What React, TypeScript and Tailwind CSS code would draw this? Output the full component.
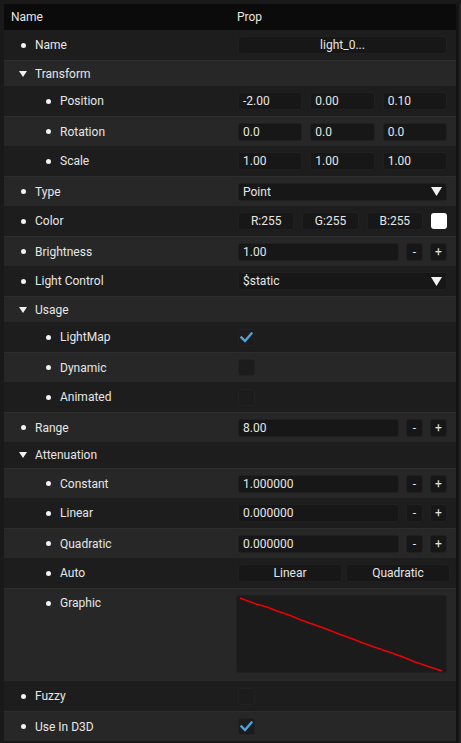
import React from "react";

const font = { fontFamily: "Roboto, 'Noto Sans', sans-serif" };

function Dot() {
  return <span className="inline-block w-[5px] h-[5px] rounded-full bg-[#f2f2f2]" />;
}

function Tri() {
  return (
    <svg width="8" height="6" viewBox="0 0 8 6" className="block">
      <polygon points="0,0 8,0 4,6" fill="#f0f0f0" />
    </svg>
  );
}

function Label({ text, level, kind }: { text: string; level: number; kind: "dot" | "tri" }) {
  const pad =
    kind === "tri"
      ? "pl-[15px]"
      : level === 0
      ? "pl-[17px]"
      : "pl-[42px]";
  return (
    <div className={`flex items-center ${pad}`}>
      {kind === "dot" ? <Dot /> : <Tri />}
      <span className={`text-[#e6e6e6] text-[12px] leading-[16px] ${kind === "dot" ? "ml-[9px]" : "ml-[8px]"}`}>{text}</span>
    </div>
  );
}

const boxCls = "h-[18px] bg-[#171717] border border-[#202020] rounded-[3px] text-[12px] leading-[16px] text-[#e6e6e6] flex items-center";

function Input({ v, w }: { v: string; w?: string }) {
  return <div className={`${boxCls} px-[4px] ${w ?? "flex-1"}`}>{v}</div>;
}

function Btn({ t }: { t: string }) {
  return <div className={`${boxCls} w-[17px] justify-center`}>{t}</div>;
}

function Check({ on }: { on: boolean }) {
  return (
    <div className="w-[17px] h-[17px] bg-[#1c1c1c] border border-[#222] rounded-[3px] flex items-center justify-center">
      {on && (
        <svg width="13" height="11" viewBox="0 0 13 11">
          <path d="M1.5 5.5 L5 9 L11.5 1.5" stroke="#4ea3dc" strokeWidth="2.4" fill="none" strokeLinecap="square" />
        </svg>
      )}
    </div>
  );
}

function Select({ v }: { v: string }) {
  return (
    <div className={`${boxCls} flex-1 px-[4px] justify-between`}>
      <span>{v}</span>
      <svg width="11" height="9" viewBox="0 0 11 9">
        <polygon points="0,0 11,0 5.5,9" fill="#f2f2f2" />
      </svg>
    </div>
  );
}

type RowDef = {
  text: string;
  level: number;
  kind: "dot" | "tri";
  widget?: React.ReactNode;
  tall?: boolean;
};

function NumPM({ v }: { v: string }) {
  return (
    <div className="flex items-center gap-[7px]">
      <Input v={v} />
      <Btn t="-" />
      <Btn t="+" />
    </div>
  );
}

export default function App() {
  const rows: RowDef[] = [
    { text: "Name", level: 0, kind: "dot", widget: <div className={`${boxCls} justify-center`}>light_0...</div> },
    { text: "Transform", level: 0, kind: "tri" },
    { text: "Position", level: 1, kind: "dot", widget: <div className="flex gap-[8px]"><Input v="-2.00" /><Input v="0.00" /><Input v="0.10" /></div> },
    { text: "Rotation", level: 1, kind: "dot", widget: <div className="flex gap-[8px]"><Input v="0.0" /><Input v="0.0" /><Input v="0.0" /></div> },
    { text: "Scale", level: 1, kind: "dot", widget: <div className="flex gap-[8px]"><Input v="1.00" /><Input v="1.00" /><Input v="1.00" /></div> },
    { text: "Type", level: 0, kind: "dot", widget: <div className="flex"><Select v="Point" /></div> },
    {
      text: "Color", level: 0, kind: "dot", widget: (
        <div className="flex items-center gap-[8px]">
          <div className={`${boxCls} flex-1 justify-center`}>R:255</div>
          <div className={`${boxCls} flex-1 justify-center`}>G:255</div>
          <div className={`${boxCls} flex-1 justify-center`}>B:255</div>
          <div className="w-[16px] h-[16px] rounded-[3px] bg-white" />
        </div>
      )
    },
    { text: "Brightness", level: 0, kind: "dot", widget: <NumPM v="1.00" /> },
    { text: "Light Control", level: 0, kind: "dot", widget: <div className="flex"><Select v="$static" /></div> },
    { text: "Usage", level: 0, kind: "tri" },
    { text: "LightMap", level: 1, kind: "dot", widget: <Check on /> },
    { text: "Dynamic", level: 1, kind: "dot", widget: <Check on={false} /> },
    { text: "Animated", level: 1, kind: "dot", widget: <Check on={false} /> },
    { text: "Range", level: 0, kind: "dot", widget: <NumPM v="8.00" /> },
    { text: "Attenuation", level: 0, kind: "tri" },
    { text: "Constant", level: 1, kind: "dot", widget: <NumPM v="1.000000" /> },
    { text: "Linear", level: 1, kind: "dot", widget: <NumPM v="0.000000" /> },
    { text: "Quadratic", level: 1, kind: "dot", widget: <NumPM v="0.000000" /> },
    {
      text: "Auto", level: 1, kind: "dot", widget: (
        <div className="flex gap-[4px] mr-[-3px]">
          <div className={`${boxCls} flex-1 justify-center`}>Linear</div>
          <div className={`${boxCls} flex-1 justify-center`}>Quadratic</div>
        </div>
      )
    },
    {
      text: "Graphic", level: 1, kind: "dot", tall: true, widget: (
        <div className="h-[78px] bg-[#1b1b1b] border border-[#202020] rounded-[3px]">
          <svg width="209" height="76" viewBox="0 0 209 76" className="block">
            <polyline
              points="3,2 19,8 30,11 40,15 52,19 64,24 78,29 92,34 102,38 116,43 126,47 140,52 152,56 166,61 178,66 190,70 205,75"
              stroke="#ee0000"
              strokeWidth="1.4"
              fill="none"
            />
          </svg>
        </div>
      )
    },
    { text: "Fuzzy", level: 0, kind: "dot", widget: <Check on={false} /> },
    { text: "Use In D3D", level: 0, kind: "dot", widget: <Check on /> },
  ];

  return (
    <div style={font} className="w-[461px] h-[743px] bg-[#191919] pt-[4px] pl-[4px] flex overflow-hidden">
      <div className="w-[452px] flex flex-col">
        <div className="h-[26px] flex bg-[#0b0b0b] text-[12px] text-[#e6e6e6] items-center">
          <div className="w-[226px] pl-[7px]">Name</div>
          <div className="flex-1 pl-[7px]">Prop</div>
        </div>
        {rows.map((r, i) => {
          const light = i % 2 === 1;
          const h = r.tall ? "h-[93px]" : r.widget ? "h-[30px]" : "h-[26px]";
          return (
            <div
              key={i}
              className={`${h} flex ${light ? "bg-[#272727] border-t border-[#2d2d2d]" : "bg-[#1d1d1d]"} ${r.tall ? "items-start" : "items-center"}`}
            >
              <div className={`w-[226px] ${r.tall ? "pt-[6px]" : ""}`}>
                <Label text={r.text} level={r.level} kind={r.kind} />
              </div>
              <div className={`flex-1 pl-[8px] pr-[9px] ${r.tall ? "pt-[6px]" : ""}`}>{r.widget}</div>
            </div>
          );
        })}
      </div>
      <div className="w-[3px] h-full bg-[#141414]" />
      <div className="w-[2px] h-full bg-[#232323]" />
    </div>
  );
}
